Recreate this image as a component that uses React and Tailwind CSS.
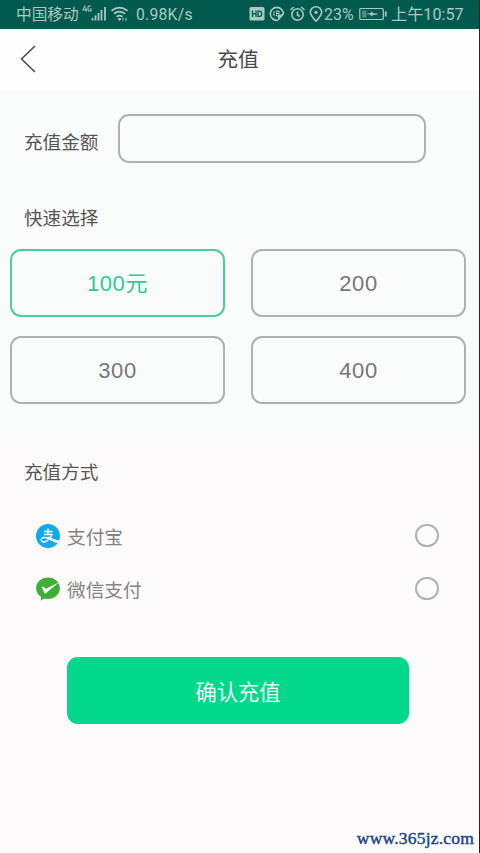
import React from "react";

function StatusBar() {
  return (
    <header className="flex h-[29px] items-center bg-[#015a4d] pl-4 pr-[15px] font-['Roboto','Noto_Sans_CJK_SC',sans-serif] text-[16px] leading-[29px] text-[#a9c9c3]">
      <span className="w-[64px] whitespace-nowrap text-[15.7px]">中国移动</span>
      <svg className="mb-[2px] ml-[2px] h-[18px] w-[49px] shrink-0" viewBox="0 0 49 18" fill="none" stroke="currentColor">
        <path d="M3.200 0.500L1 5h4M4 2.500v4M9 1H6.800L6 2v3l.8 1H9V4H7.800" strokeWidth="1.1" />
        <path d="M10.500 13v2.500M13.500 10.500v5M16.500 8v7.500M19.500 5v10.500M23 2v13.500" strokeWidth="1.8" />
        <path d="M29.500 5.700q8-6.200 16 0M32 8.800q5.500-4.200 11 0M34.500 11.700q3-2.300 6 0" strokeWidth="1.8" />
        <path d="M36 13.800l1.500 1.700 1.500-1.700zM41 12.800v3M44 12.800v3" fill="currentColor" strokeWidth="1" />
      </svg>
      <span className="ml-[5px] whitespace-nowrap text-[15.7px] tracking-[0.25px]">0.98K/s</span>
      <div className="ml-auto flex items-center">
        <svg className="-mr-[2px] mb-[2px] h-[18px] w-[74px]" viewBox="0 0 74 18" fill="none" stroke="currentColor" strokeWidth="1.6">
          <rect x="0.500" y="2" width="15" height="13.500" rx="1.500" fill="currentColor" stroke="none" />
          <path d="M3.500 5.500v6.500M7 5.500v6.500M3.500 8.800H7M9 6.100v5.300h1.500q2.200 0 2.200-2.600t-2.200-2.700z" stroke="#015a4d" strokeWidth="1.300" />
          <path d="M29 15.300A6.500 6.500 0 1 1 34.300 9.500M22.500 12.500q3 3.500 6.500 2.500" />
          <path d="M34.500 9.500L29.500 15v-4.500z" fill="currentColor" strokeWidth="1" />
          <path d="M25 6v5M27.500 6v5h2.500V6zM27.500 8.500h2.500" strokeWidth="1" />
          <circle cx="48.500" cy="9.500" r="5.700" />
          <path d="M48.500 6.500V10l2.200 1.500M41.500 5l3.300-3M52.200 2l3.300 3" />
          <path d="M67 16.200q-5.700-6-5.700-9.200a5.700 5.200 0 0 1 11.400 0q0 3.200-5.700 9.200z" />
          <circle cx="67" cy="7.300" r="1.600" fill="currentColor" stroke="none" />
        </svg>
        <span className="ml-[3px] w-[31px] whitespace-nowrap text-[16px]">23%</span>
        <svg className="mb-[2px] ml-1 h-[14px] w-[28px]" viewBox="0 0 28 14" fill="none" stroke="currentColor" strokeWidth="1.2">
          <rect x="0.800" y="1.500" width="23.500" height="11" rx="1" />
          <path d="M26.800 4.500v5" strokeWidth="1.800" />
          <path d="M3 3.500h4.500v7H3z" fill="currentColor" opacity="0.450" stroke="none" />
          <path d="M7 6.500l5-.3V4.500l3 2h3.500v1L13.500 8v1.500l-3-2z" fill="currentColor" stroke="none" />
        </svg>
        <span className="ml-1 w-[73px] whitespace-nowrap text-[16.2px]">上午10:57</span>
      </div>
    </header>
  );
}

function AmountOption({ label, selected }) {
  return (
    <button
      className={`h-[68px] w-[215px] rounded-[11px] border-2 text-center font-['Liberation_Sans','Noto_Sans_CJK_SC',sans-serif] text-[22px] tracking-[0.6px] ${
        selected ? "border-[#4dcc9c] text-[#2bcb91]" : "border-[#b0b1b1] text-[#777]"
      }`}
    >
      <span className="block pt-[2px] leading-[62px]">{label}</span>
    </button>
  );
}

function AlipayIcon() {
  return (
    <svg className="h-6 w-6" viewBox="0 0 24 24" fill="none">
      <circle cx="12" cy="12" r="12" fill="#11a9e9" />
      <path d="M8 7.500h8.500M12 4.500v6" stroke="#fff" strokeWidth="1.500" />
      <path d="M8 10.500h8q-1.500 4.500-5.300 6.700c-2.700 1.500-5.700.6-5.500-1.600.2-2.400 4.200-2.900 7.200-1" stroke="#fff" strokeWidth="1.400" />
      <path d="M12.300 12.500q4.500 3 11 4l-1.700 2.500q-5.800-1-10-5z" fill="#fff" />
    </svg>
  );
}

function WechatPayIcon() {
  return (
    <svg className="h-6 w-6" viewBox="0 0 24 24">
      <path d="M12 .6C5.500.6.100 5.200.100 11.300c0 3.700 2 6.800 5 8.700L4.900 23.500l3.500-2q1.700.5 3.600.5c6.500 0 11.900-4.700 11.900-10.700S18.500.6 12 .6z" fill="#3fae35" />
      <path d="M5.600 9.900q1.100-.8 2 .1l2.300 1.700L23 5.300 10.200 16q-1.400 1-2-.5z" fill="#fff" />
    </svg>
  );
}

function PaymentRow({ icon, label }) {
  return (
    <label className="flex h-[53px] items-center pl-9 pr-10 text-[18.7px] text-[#858484]">
      {icon}
      <span className="ml-[7px] mt-[2px] whitespace-nowrap">{label}</span>
      <span className="-mt-px ml-auto h-[23px] w-6 rounded-full border-2 border-[#b2b1b1]" />
    </label>
  );
}

export default function App() {
  return (
    <div className="h-[853px] w-[480px] overflow-hidden border-r border-[#202525] bg-[#fdfafb] font-['Noto_Sans_CJK_SC',sans-serif]">
      <StatusBar />
      <nav className="grid h-[61px] grid-cols-[1fr_auto_1fr] items-start bg-[#fefefe] pl-5 pr-[23px]">
        <svg className="mt-4 h-7 w-4" viewBox="0 0 16 28" fill="none" stroke="#4d4d4d" strokeWidth="1.600">
          <path d="M15 1L1.500 14 15 27" />
        </svg>
        <h1 className="text-[20.800px] leading-[59px] text-[#4c4c4c]">充值</h1>
      </nav>
      <main>
        <section className="h-[345px] bg-[#fafcfb] pt-[24px]">
          <div className="flex h-[49px] items-center pl-6">
            <label htmlFor="amount" className="mt-[4px] w-[94px] whitespace-nowrap text-[18.600px] text-[#555]">充值金额</label>
            <input id="amount" className="h-[49px] w-[308px] rounded-[11px] border-2 border-[#b0b1b1] bg-transparent px-3 outline-none" />
          </div>
          <h2 className="mt-[39px] pl-6 text-[18.600px] leading-[30px] text-[#555]">快速选择</h2>
          <div className="mt-[17px] grid grid-cols-[215px_215px] gap-x-[26px] gap-y-[19px] pl-[10px]">
            <AmountOption label="100元" selected />
            <AmountOption label="200" />
            <AmountOption label="300" />
            <AmountOption label="400" />
          </div>
        </section>
        <section>
          <h2 className="pl-6 pt-[21px] text-[18.600px] leading-[30px] text-[#555]">充值方式</h2>
          <div className="mt-[23px]">
            <PaymentRow icon={<AlipayIcon />} label="支付宝" />
            <PaymentRow icon={<WechatPayIcon />} label="微信支付" />
          </div>
          <button className="ml-[67px] mt-[42px] block h-[67px] w-[342px] rounded-[11px] bg-[#02d88b] text-[21.300px] leading-[67px] text-[#e8fff5]">
            确认充值
          </button>
        </section>
      </main>
      <footer className="mt-[102px] pr-[5px] text-right font-['Liberation_Serif',serif] text-[17.500px] leading-[24px] tracking-[0.200px] text-[#174383] [-webkit-text-stroke:0.4px_#174383]">
        www.365jz.com
      </footer>
    </div>
  );
}
